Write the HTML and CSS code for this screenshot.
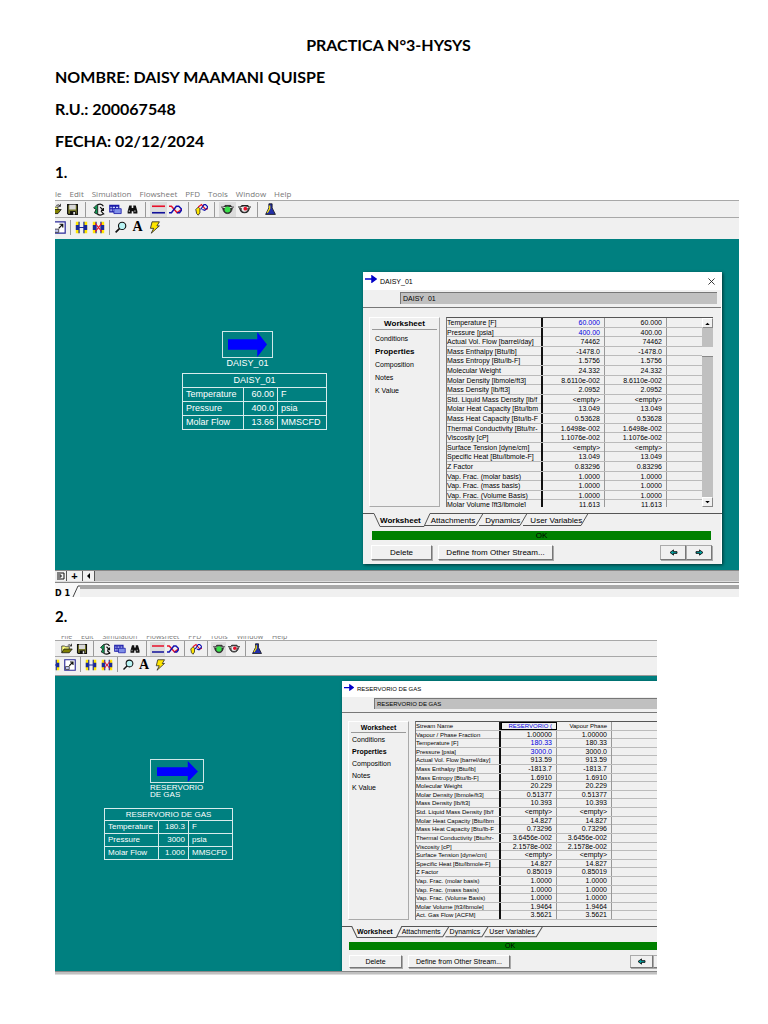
FILE: index.html
```html
<!DOCTYPE html>
<html lang="es">
<head>
<meta charset="utf-8">
<meta name="viewport" content="width=device-width, initial-scale=1">
<title>PRACTICA N°3-HYSYS</title>
<link rel="stylesheet" href="styles.css">
</head>
<body>
<svg class="sprites" aria-hidden="true">
  <symbol id="i-open" viewBox="0 0 16 16"><path d="M1 13V4h4l1 1h5v3" fill="#ffff80" stroke="#222"/><path d="M1 13l3-5h11l-4 5z" fill="#808000" stroke="#111"/><path d="M9 3q3-2 5 1M14 1v3h-3" fill="none" stroke="#111"/></symbol>
  <symbol id="i-save" viewBox="0 0 16 16"><path d="M2 2h12v12H3l-1-1z" fill="#77772a" stroke="#111" stroke-width="1.5"/><path d="M4 2h8v6H4z" fill="#d8d8d8"/><path d="M5 10h7v4H5z" fill="#111"/><path d="M9 11h2v3H9z" fill="#eee"/></symbol>
  <symbol id="i-nav" viewBox="0 0 16 16"><path d="M6 2L2 6l3 2-2 4 4 2V2z" fill="#119a55" stroke="#111"/><path d="M7 2q5-2 7 2M7 14q4 2 7-1M10 5l4 4M14 6v3h-3M11 10l4 4" fill="none" stroke="#111" stroke-width="1.5"/></symbol>
  <symbol id="i-book" viewBox="0 0 16 16"><path d="M1 3h11v8H1z" fill="#cfd8ff" stroke="#1a1aa8" stroke-width="1.5"/><path d="M1 4h11M4 4v7M8 4v7M1 7h11" stroke="#1a1aa8" stroke-width="1.3"/><path d="M6 7h9v6H6z" fill="#8090e8" stroke="#1a1aa8"/></symbol>
  <symbol id="i-find" viewBox="0 0 16 16"><path d="M4 3h3v3h2V3h3l2 7v3H9v-3H7v3H2v-3z" fill="#111"/><path d="M4 9v2M11 9v2" stroke="#eee"/></symbol>
  <symbol id="i-lines" viewBox="0 0 16 16"><path d="M0 4h16" stroke="#e8102a" stroke-width="2"/><path d="M0 12h16" stroke="#10109a" stroke-width="2"/></symbol>
  <symbol id="i-cross" viewBox="0 0 16 16"><path d="M0 4h3l7 8 5-4" fill="none" stroke="#e8102a" stroke-width="1.8"/><path d="M0 12h3l6-8h3l4 4-3 4h-3" fill="none" stroke="#1010b0" stroke-width="1.8"/></symbol>
  <symbol id="i-hand" viewBox="0 0 16 16"><path d="M1 8l3-3 2 2v5l-2 3-2-2z" fill="#ffe600" stroke="#222"/><path d="M4 5l4-3 5 6 3-1" fill="none" stroke="#e8102a" stroke-width="1.5"/><path d="M7 8l4-6h2l3 3-4 4-3-1" fill="none" stroke="#1010b0" stroke-width="1.5"/></symbol>
  <symbol id="i-go" viewBox="0 0 16 16"><path d="M0 5h3l2-2h7l1 2h3M2 6q1 7 6 7t6-7" fill="#333" stroke="#222"/><circle cx="8" cy="8" r="3.600" fill="#39e04a"/></symbol>
  <symbol id="i-hold" viewBox="0 0 16 16"><path d="M0 5h3l2-2h7l1 2h3M2 6q1 6 6 6t6-6" fill="#666" stroke="#222" stroke-width="1.300"/><circle cx="8" cy="7.500" r="3.300" fill="#eee"/><circle cx="9" cy="7" r="2.300" fill="#e8102a"/></symbol>
  <symbol id="i-flask" viewBox="0 0 16 16"><path d="M6 1h4v5l4 8H2l4-8z" fill="#2330a8" stroke="#111"/><path d="M7 3v4l-3 5" fill="none" stroke="#ffe600" stroke-width="1.5"/></symbol>
  <symbol id="i-size" viewBox="0 0 16 16"><path d="M1 1h14v14H1z" fill="#fff" stroke="#2a2a99" stroke-width="1.5"/><path d="M2 10h5v4H2z" fill="#bcc3ee" stroke="#333"/><path d="M7 9l5-5M8 4h4v4" fill="none" stroke="#111" stroke-width="1.5"/></symbol>
  <symbol id="i-link" viewBox="0 0 16 16"><path d="M1 1h4v14H1zM11 1h4v14h-4z" fill="#ffe600"/><path d="M1 5h4v6H1zM11 5h4v6h-4z" fill="#1a2a99"/><path d="M5 1v14M11 1v14M5 8h6" stroke="#1a2a99" stroke-width="1.5"/></symbol>
  <symbol id="i-unlink" viewBox="0 0 16 16"><path d="M1 1h4v14H1zM11 1h4v14h-4z" fill="#ffe600"/><path d="M1 5h4v6H1zM11 5h4v6h-4z" fill="#1a2a99"/><path d="M5 1v14M11 1v14" stroke="#1a2a99" stroke-width="1.5"/><path d="M4 3l8 10M12 3L4 13" stroke="#e8102a" stroke-width="1.3"/></symbol>
  <symbol id="i-zoom" viewBox="0 0 16 16"><circle cx="10" cy="6" r="4.500" fill="#b9f4f4" stroke="#111" stroke-width="1.4"/><path d="M7 9l-5 5" stroke="#111" stroke-width="2"/></symbol>
  <symbol id="i-bolt" viewBox="0 0 16 16"><path d="M5 1h9l-3 5h3L4 15l3-6H3z" fill="#ffe600" stroke="#222"/></symbol>
  <symbol id="i-arrow" viewBox="0 0 40 24" preserveAspectRatio="none"><path d="M0 7h30V0l10 12-10 12v-7H0z" fill="#0000ff"/></symbol>
  <symbol id="i-mini" viewBox="0 0 12 8"><path d="M0 4h8M7 1l4 3-4 3z" fill="#0000c8" stroke="#0000c8" stroke-width="1.5"/></symbol>
  <symbol id="i-left" viewBox="0 0 10 8"><path d="M1 4l4-3v2h4v2H5v2z" fill="#00a0a0" stroke="#111"/></symbol>
  <symbol id="i-right" viewBox="0 0 10 8"><path d="M9 4L5 1v2H1v2h4v2z" fill="#00a0a0" stroke="#111"/></symbol>
  <symbol id="i-tabs" viewBox="0 0 359 14" preserveAspectRatio="none"><path d="M0 0.500h11l6 13h44l6-13h292M62 12.500h51l7-12M116 12.500h41l7-12M160 12.500h58l7-12" fill="none" stroke="#555" vector-effect="non-scaling-stroke"/></symbol>
</svg>

<main class="page">
  <h1 class="line line--center">PRACTICA N°3-HYSYS</h1>
  <p class="line">NOMBRE: DAISY MAAMANI QUISPE</p>
  <p class="line">R.U.: 200067548</p>
  <p class="line">FECHA: 02/12/2024</p>
  <h2 class="line line--first">1.</h2>

  <section class="app" aria-label="DAISY_01">
    <nav class="menu"><a href="#">le</a><a href="#">Edit</a><a href="#">Simulation</a><a href="#">Flowsheet</a><a href="#">PFD</a><a href="#">Tools</a><a href="#">Window</a><a href="#">Help</a></nav>
    <div class="toolbar toolbar--main">
      <button class="tool" aria-label="Open"><svg><use href="#i-open"/></svg></button>
      <button class="tool" aria-label="Save"><svg><use href="#i-save"/></svg></button>
      <span class="sep"></span>
      <button class="tool" aria-label="Navigator"><svg><use href="#i-nav"/></svg></button>
      <button class="tool" aria-label="Workbook"><svg><use href="#i-book"/></svg></button>
      <button class="tool" aria-label="Find"><svg><use href="#i-find"/></svg></button>
      <span class="sep"></span>
      <button class="tool tool--on" aria-label="Streams"><svg><use href="#i-lines"/></svg></button>
      <button class="tool" aria-label="Crossed streams"><svg><use href="#i-cross"/></svg></button>
      <span class="sep"></span>
      <button class="tool" aria-label="Move"><svg><use href="#i-hand"/></svg></button>
      <span class="sep"></span>
      <button class="tool tool--on" aria-label="Solve"><svg><use href="#i-go"/></svg></button>
      <button class="tool" aria-label="Hold"><svg><use href="#i-hold"/></svg></button>
      <span class="sep"></span>
      <button class="tool" aria-label="Basis"><svg><use href="#i-flask"/></svg></button>
    </div>
    <div class="toolbar toolbar--pfd">
      <button class="tool" aria-label="Resize"><svg><use href="#i-size"/></svg></button>
      <span class="sep sep--tight"></span>
      <button class="tool" aria-label="Attach"><svg><use href="#i-link"/></svg></button>
      <button class="tool" aria-label="Detach"><svg><use href="#i-unlink"/></svg></button>
      <span class="sep sep--tight"></span>
      <button class="tool" aria-label="Zoom"><svg><use href="#i-zoom"/></svg></button>
      <button class="tool tool--text">A</button>
      <button class="tool" aria-label="Quick route"><svg><use href="#i-bolt"/></svg></button>
    </div>

    <div class="canvas">
      <div class="node">
        <div class="node-box"><svg><use href="#i-arrow"/></svg></div>
        <div class="node-name">DAISY_01</div>
      </div>
      <table class="flow">
        <colgroup><col class="flow-label"><col class="flow-value"><col></colgroup>
        <tr><th colspan="3">DAISY_01</th></tr>
        <tr><td>Temperature</td><td>60.00</td><td>F</td></tr>
        <tr><td>Pressure</td><td>400.0</td><td>psia</td></tr>
        <tr><td>Molar Flow</td><td>13.66</td><td>MMSCFD</td></tr>
      </table>

      <section class="window">
        <header class="title"><svg><use href="#i-mini"/></svg><span>DAISY_01</span>
          <button class="close" aria-label="Close"><svg viewBox="0 0 8 8"><path d="M0.500 0.500l7 7M7.500 0.500l-7 7" stroke="#222"/></svg></button></header>
        <div class="namebar"><input value="DAISY_01" aria-label="Stream name" readonly></div>
        <div class="body">
          <aside class="side">
            <h3>Worksheet</h3>
            <a href="#">Conditions</a><a href="#" class="current">Properties</a><a href="#">Composition</a><a href="#">Notes</a><a href="#">K Value</a>
          </aside>
          <div class="sheet">
            <table class="props">
              <tbody>
                <tr><th>Temperature [F]</th><td class="set">60.000</td><td>60.000</td><td></td></tr>
                <tr><th>Pressure [psia]</th><td class="set">400.00</td><td>400.00</td><td></td></tr>
                <tr><th>Actual Vol. Flow [barrel/day]</th><td>74462</td><td>74462</td><td></td></tr>
                <tr><th>Mass Enthalpy [Btu/lb]</th><td>-1478.0</td><td>-1478.0</td><td></td></tr>
                <tr><th>Mass Entropy [Btu/lb-F]</th><td>1.5756</td><td>1.5756</td><td></td></tr>
                <tr><th>Molecular Weight</th><td>24.332</td><td>24.332</td><td></td></tr>
                <tr><th>Molar Density [lbmole/ft3]</th><td>8.6110e-002</td><td>8.6110e-002</td><td></td></tr>
                <tr><th>Mass Density [lb/ft3]</th><td>2.0952</td><td>2.0952</td><td></td></tr>
                <tr><th>Std. Liquid Mass Density [lb/f</th><td>&lt;empty&gt;</td><td>&lt;empty&gt;</td><td></td></tr>
                <tr><th>Molar Heat Capacity [Btu/lbm</th><td>13.049</td><td>13.049</td><td></td></tr>
                <tr><th>Mass Heat Capacity [Btu/lb-F</th><td>0.53628</td><td>0.53628</td><td></td></tr>
                <tr><th>Thermal Conductivity [Btu/hr-</th><td>1.6498e-002</td><td>1.6498e-002</td><td></td></tr>
                <tr><th>Viscosity [cP]</th><td>1.1076e-002</td><td>1.1076e-002</td><td></td></tr>
                <tr><th>Surface Tension [dyne/cm]</th><td>&lt;empty&gt;</td><td>&lt;empty&gt;</td><td></td></tr>
                <tr><th>Specific Heat [Btu/lbmole-F]</th><td>13.049</td><td>13.049</td><td></td></tr>
                <tr><th>Z Factor</th><td>0.83296</td><td>0.83296</td><td></td></tr>
                <tr><th>Vap. Frac. (molar basis)</th><td>1.0000</td><td>1.0000</td><td></td></tr>
                <tr><th>Vap. Frac. (mass basis)</th><td>1.0000</td><td>1.0000</td><td></td></tr>
                <tr><th>Vap. Frac. (Volume Basis)</th><td>1.0000</td><td>1.0000</td><td></td></tr>
                <tr><th>Molar Volume [ft3/lbmole]</th><td>11.613</td><td>11.613</td><td></td></tr>
              </tbody>
            </table>
            <div class="scroll"><button aria-label="Up"><svg viewBox="0 0 6 4"><path d="M0 4l3-3 3 3z"/></svg></button><span class="thumb"></span><button aria-label="Down"><svg viewBox="0 0 6 4"><path d="M0 0l3 3 3-3z"/></svg></button></div>
          </div>
        </div>
        <div class="tabs"><svg class="tabs-line"><use href="#i-tabs"/></svg><button class="current">Worksheet</button><button>Attachments</button><button>Dynamics</button><button>User Variables</button></div>
        <div class="status">OK</div>
        <div class="actions"><button class="btn btn--delete">Delete</button><button class="btn btn--define">Define from Other Stream...</button>
          <button class="btn btn--step btn--prev" aria-label="Previous"><svg><use href="#i-left"/></svg></button><button class="btn btn--step" aria-label="Next"><svg><use href="#i-right"/></svg></button></div>
      </section>
    </div>

    <div class="hscroll"><button aria-label="Fit"><svg viewBox="0 0 8 8"><path d="M0 1h7v6H0M0 3h4v2H0" fill="none" stroke="#111"/></svg></button><button class="plus">+</button><button aria-label="Left"><svg viewBox="0 0 8 8"><path d="M5 1v6L2 4z"/></svg></button></div>
    <div class="sheet-tabs"><span>D 1</span><svg viewBox="0 0 8 12"><path d="M1 12L6 1h2" fill="none" stroke="#444"/></svg><div class="sheet-bar"></div></div>
  </section>

  <h2 class="line line--second">2.</h2>

  <section class="app app--small" aria-label="RESERVORIO DE GAS">
    <nav class="menu"><a href="#">File</a><a href="#">Edit</a><a href="#">Simulation</a><a href="#">Flowsheet</a><a href="#">PFD</a><a href="#">Tools</a><a href="#">Window</a><a href="#">Help</a></nav>
    <div class="toolbar toolbar--main">
      <button class="tool" aria-label="Open"><svg><use href="#i-open"/></svg></button>
      <button class="tool" aria-label="Save"><svg><use href="#i-save"/></svg></button>
      <span class="sep"></span>
      <button class="tool" aria-label="Navigator"><svg><use href="#i-nav"/></svg></button>
      <button class="tool" aria-label="Workbook"><svg><use href="#i-book"/></svg></button>
      <button class="tool" aria-label="Find"><svg><use href="#i-find"/></svg></button>
      <span class="sep"></span>
      <button class="tool tool--on" aria-label="Streams"><svg><use href="#i-lines"/></svg></button>
      <button class="tool" aria-label="Crossed streams"><svg><use href="#i-cross"/></svg></button>
      <span class="sep"></span>
      <button class="tool" aria-label="Move"><svg><use href="#i-hand"/></svg></button>
      <span class="sep"></span>
      <button class="tool tool--on" aria-label="Solve"><svg><use href="#i-go"/></svg></button>
      <button class="tool" aria-label="Hold"><svg><use href="#i-hold"/></svg></button>
      <span class="sep"></span>
      <button class="tool" aria-label="Basis"><svg><use href="#i-flask"/></svg></button>
    </div>
    <div class="toolbar toolbar--pfd">
      <button class="tool" aria-label="Insert"><svg><use href="#i-link"/></svg></button>
      <button class="tool" aria-label="Resize"><svg><use href="#i-size"/></svg></button>
      <span class="sep sep--tight"></span>
      <button class="tool" aria-label="Attach"><svg><use href="#i-link"/></svg></button>
      <button class="tool" aria-label="Detach"><svg><use href="#i-unlink"/></svg></button>
      <span class="sep sep--tight"></span>
      <button class="tool" aria-label="Zoom"><svg><use href="#i-zoom"/></svg></button>
      <button class="tool tool--text">A</button>
      <button class="tool" aria-label="Quick route"><svg><use href="#i-bolt"/></svg></button>
    </div>

    <div class="canvas">
      <div class="node">
        <div class="node-box"><svg><use href="#i-arrow"/></svg></div>
        <div class="node-name">RESERVORIO<br>DE GAS</div>
      </div>
      <table class="flow">
        <colgroup><col class="flow-label"><col class="flow-value"><col></colgroup>
        <tr><th colspan="3">RESERVORIO DE GAS</th></tr>
        <tr><td>Temperature</td><td>180.3</td><td>F</td></tr>
        <tr><td>Pressure</td><td>3000</td><td>psia</td></tr>
        <tr><td>Molar Flow</td><td>1.000</td><td>MMSCFD</td></tr>
      </table>

      <section class="window">
        <header class="title"><svg><use href="#i-mini"/></svg><span>RESERVORIO DE GAS</span></header>
        <div class="namebar"><input value="RESERVORIO DE GAS" aria-label="Stream name" readonly></div>
        <div class="body">
          <aside class="side">
            <h3>Worksheet</h3>
            <a href="#">Conditions</a><a href="#" class="current">Properties</a><a href="#">Composition</a><a href="#">Notes</a><a href="#">K Value</a>
          </aside>
          <div class="sheet">
            <table class="props">
              <tbody>
                <tr><th>Stream Name</th><td class="set picked">RESERVORIO (</td><td>Vapour Phase</td><td></td></tr>
                <tr><th>Vapour / Phase Fraction</th><td>1.00000</td><td>1.00000</td><td></td></tr>
                <tr><th>Temperature [F]</th><td class="set">180.33</td><td>180.33</td><td></td></tr>
                <tr><th>Pressure [psia]</th><td class="set">3000.0</td><td>3000.0</td><td></td></tr>
                <tr><th>Actual Vol. Flow [barrel/day]</th><td>913.59</td><td>913.59</td><td></td></tr>
                <tr><th>Mass Enthalpy [Btu/lb]</th><td>-1813.7</td><td>-1813.7</td><td></td></tr>
                <tr><th>Mass Entropy [Btu/lb-F]</th><td>1.6910</td><td>1.6910</td><td></td></tr>
                <tr><th>Molecular Weight</th><td>20.229</td><td>20.229</td><td></td></tr>
                <tr><th>Molar Density [lbmole/ft3]</th><td>0.51377</td><td>0.51377</td><td></td></tr>
                <tr><th>Mass Density [lb/ft3]</th><td>10.393</td><td>10.393</td><td></td></tr>
                <tr><th>Std. Liquid Mass Density [lb/f</th><td>&lt;empty&gt;</td><td>&lt;empty&gt;</td><td></td></tr>
                <tr><th>Molar Heat Capacity [Btu/lbm</th><td>14.827</td><td>14.827</td><td></td></tr>
                <tr><th>Mass Heat Capacity [Btu/lb-F</th><td>0.73296</td><td>0.73296</td><td></td></tr>
                <tr><th>Thermal Conductivity [Btu/hr-</th><td>3.6456e-002</td><td>3.6456e-002</td><td></td></tr>
                <tr><th>Viscosity [cP]</th><td>2.1578e-002</td><td>2.1578e-002</td><td></td></tr>
                <tr><th>Surface Tension [dyne/cm]</th><td>&lt;empty&gt;</td><td>&lt;empty&gt;</td><td></td></tr>
                <tr><th>Specific Heat [Btu/lbmole-F]</th><td>14.827</td><td>14.827</td><td></td></tr>
                <tr><th>Z Factor</th><td>0.85019</td><td>0.85019</td><td></td></tr>
                <tr><th>Vap. Frac. (molar basis)</th><td>1.0000</td><td>1.0000</td><td></td></tr>
                <tr><th>Vap. Frac. (mass basis)</th><td>1.0000</td><td>1.0000</td><td></td></tr>
                <tr><th>Vap. Frac. (Volume Basis)</th><td>1.0000</td><td>1.0000</td><td></td></tr>
                <tr><th>Molar Volume [ft3/lbmole]</th><td>1.9464</td><td>1.9464</td><td></td></tr>
                <tr><th>Act. Gas Flow [ACFM]</th><td>3.5621</td><td>3.5621</td><td></td></tr>
              </tbody>
            </table>
          </div>
        </div>
        <div class="tabs"><svg class="tabs-line"><use href="#i-tabs"/></svg><button class="current">Worksheet</button><button>Attachments</button><button>Dynamics</button><button>User Variables</button></div>
        <div class="status">OK</div>
        <div class="actions"><button class="btn btn--delete">Delete</button><button class="btn btn--define">Define from Other Stream...</button>
          <button class="btn btn--step btn--prev" aria-label="Previous"><svg><use href="#i-left"/></svg></button><button class="btn btn--step" aria-label="Next"><svg><use href="#i-right"/></svg></button></div>
      </section>
    </div>
    <div class="hscroll"></div>
  </section>
</main>
</body>
</html>
```

FILE: styles.css
```css
* { box-sizing: border-box; }

body {
  margin: 0;
  background: #fff;
  color: #000;
  font-family: "Liberation Sans", sans-serif;
}

button, input { margin: 0; padding: 0; border: 0; background: none; color: inherit; font: inherit; }
a { color: inherit; text-decoration: none; }
svg { display: block; flex: none; }
.sprites { position: absolute; width: 0; height: 0; }

.page { padding: 29px 46px 40px 55px; }

.line {
  margin: 0;
  font-family: Lato, sans-serif;
  font-size: 16px;
  font-weight: 700;
  line-height: 32px;
}
.line--center { text-align: center; }
.line--first { font-size: 15px; line-height: 31px; }
.line--second { font-size: 15px; line-height: 39px; }

/* Simulator screen */
.app {
  --tool: 17px;
  --icon: 13px;
  --sep: 9px;
  --small: 7px;
  --ui: 8px;
  margin-right: -17px;
  overflow: hidden;
}

.menu {
  display: flex;
  gap: 8px;
  height: 12px;
  overflow: hidden;
  font-family: "Open Sans", sans-serif;
  font-size: 8px;
  line-height: 11px;
  color: #777;
}

.toolbar {
  display: flex;
  align-items: center;
  height: 17px;
  background: #f0f0f0;
  border-top: 1px solid #a8a8a8;
}
.toolbar--main .tool:first-child { margin-left: -8px; }
.toolbar--pfd { height: 22px; padding-bottom: 3px; }
.toolbar--pfd .tool:first-child { margin-left: -4px; }

.tool {
  display: flex;
  flex: none;
  align-items: center;
  justify-content: center;
  width: var(--tool);
  height: 15px;
}
.tool svg { width: var(--icon); height: var(--icon); }
.tool--on { background: #dcdcdc; }
.tool--text { font-family: "Liberation Serif", serif; font-size: 14px; font-weight: 700; }
.sep { flex: none; width: 1px; height: 15px; margin: 0 calc((var(--sep) - 1px) / 2); background: #999; }
.sep--tight { margin: 0 2px; }

.canvas {
  position: relative;
  height: 331px;
  overflow: hidden;
  background: #008080;
}

.node { position: absolute; left: 167px; top: 92px; width: 51px; color: #fff; font-size: 9px; line-height: 10px; }
.node-box { display: flex; align-items: center; justify-content: center; height: 27px; border: 1px solid #d0e8e8; }
.node-box svg { width: 39px; height: 25px; }
.node-name { text-align: center; white-space: nowrap; }

.flow {
  position: absolute;
  left: 127px;
  top: 134px;
  width: 145px;
  border-collapse: collapse;
  table-layout: fixed;
  color: #fff;
  font-size: 9px;
  line-height: 13px;
  white-space: nowrap;
}
.flow th, .flow td { padding: 0 3px; border: 1px solid #d8ecec; font-weight: 400; }
.flow-label { width: 61px; }
.flow-value { width: 34px; }
.flow td:nth-child(2) { text-align: right; }

/* Stream property window */
.window {
  position: absolute;
  left: 308px;
  top: 33px;
  width: 359px;
  padding-bottom: 4px;
  background: #f0f0f0;
  font-size: var(--small);
  border-right: 1px solid #fff;
  box-shadow: 1px 1px 3px #033;
}

.title { display: flex; align-items: center; height: 18px; padding: 0 6px 0 2px; background: #fff; }
.title > svg { width: 12px; height: 8px; margin: 0 3px 4px 0; }
.close { margin-left: auto; }
.close svg { width: 7px; height: 7px; }

.namebar {
  display: flex;
  align-items: center;
  height: 18px;
  padding: 0 4px 2px 37px;
  border-bottom: 1px solid #777;
}
.namebar input { width: 100%; height: 12px; padding-left: 2px; background: #c0c0c0; border: solid #777; border-width: 1px 0 0 1px; font-size: var(--small); line-height: 11px; }

.body { display: flex; gap: 6px; height: 205px; padding: 9px 8px 6px 6px; }

.side { flex: none; width: 71px; border: 1px solid; border-color: #fff #aaa #aaa #fff; }
.side h3 { height: 12px; margin: 0 2px 2px; border-bottom: 1px solid #999; font-size: var(--ui); line-height: 12px; text-align: center; }
.side a { display: block; padding-left: 5px; line-height: 13px; }
.side .current, .tabs .current { font-weight: 700; }
.side .current { font-size: var(--ui); }

.sheet { display: flex; flex: 1; min-width: 0; overflow: hidden; border-top: 1px solid #555; border-left: 1px solid #777; }
.props { display: block; flex: 1; min-width: 0; }
.props tbody { display: grid; grid-template-rows: repeat(20, 1fr); height: 192px; }
.props tr { display: grid; grid-template-columns: 96px 62px 62px 1fr; min-height: 0; border-bottom: 1px solid #bbb; }
.props th, .props td { display: block; min-width: 0; padding: 0 4px 0 0; border-right: 1px solid #999; white-space: nowrap; line-height: 9px; }
.props th { padding: 0; border-right: 2px solid #111; font-weight: 400; text-align: left; }
.props td { text-align: right; }
.props td:last-child { border-right: 0; }
.props .set { color: #0000e0; }
.props .picked { border: 1px solid #000; line-height: 7px; }

.scroll { display: flex; flex: none; flex-direction: column; width: 11px; background: #c0c0c0; }
.scroll button { display: flex; align-items: center; justify-content: center; height: 10px; background: #f0f0f0; border: 1px solid; border-color: #fff #888 #888 #fff; }
.scroll svg { width: 5px; height: 3px; }
.thumb { height: 10px; margin: 19px 0 auto; background: #f0f0f0; border-bottom: 1px solid #888; }

.tabs { position: relative; display: flex; gap: 10px; height: 14px; padding-left: 17px; font-size: var(--ui); line-height: 13px; white-space: nowrap; }
.tabs-line { position: absolute; left: 0; top: 0; width: 359px; height: 14px; }
.tabs button { position: relative; }

.status { height: 9px; margin: 4px 10px 5px 9px; background: #008000; color: #000; font-size: var(--ui); line-height: 9px; text-align: center; }

.actions { display: flex; gap: 6px; padding: 0 9px 0 8px; }
.btn { display: flex; flex: none; align-items: center; justify-content: center; height: 15px; border: 1px solid; border-color: #fff #777 #777 #fff; font-size: var(--ui); white-space: nowrap; box-shadow: 1px 1px 0 #aaa; }
.btn--delete { width: 61px; }
.btn--define { width: 115px; }
.btn--step { width: 26px; border-color: #aaa #777 #777 #aaa; }
.btn--step svg { width: 9px; height: 7px; }
.btn--prev { margin: 0 -6px 0 auto; }

.hscroll { display: flex; height: 12px; background: #c0c0c0; border-top: 1px solid #888; border-bottom: 1px solid #ddd; }
.hscroll button { display: flex; align-items: center; justify-content: center; width: 12px; background: #f0f0f0; border-right: 1px solid #555; font-size: 11px; font-weight: 700; line-height: 10px; }
.hscroll .plus { width: 16px; }
.hscroll svg { width: 8px; height: 8px; }

.sheet-tabs { display: flex; height: 15px; border-top: 1px solid #888; background: #f8f8f8; }
.sheet-tabs span { padding-top: 5px; font-family: "DejaVu Sans", sans-serif; font-size: 8px; font-weight: 700; line-height: 11px; }
.sheet-tabs svg { width: 8px; height: 12px; margin: 2px 0 0 2px; }
.sheet-bar { flex: 1; margin-top: 2px; border-top: 4px solid #a8a8a8; background: #f0f0f0; }

/* Smaller, cropped screen */
.app--small {
  --tool: 15px;
  --icon: 12px;
  --sep: 8px;
  --small: 6px;
  --ui: 7px;
  max-width: 602px;
}
.app--small .menu { height: 4px; padding-left: 6px; font-size: 7px; line-height: 1px; gap: 9px; }
.app--small .toolbar { height: 16px; }
.app--small .toolbar--main .tool:first-child { margin-left: 4px; }
.app--small .toolbar--pfd { --tool: 16px; height: 20px; border-bottom: 1px solid #999; }
.app--small .toolbar--pfd .tool:first-child { margin-left: -9px; }
.app--small .tool { height: 14px; }
.app--small .canvas { height: 295px; }
.app--small .node { left: 95px; top: 83px; width: 54px; font-size: 8px; line-height: 7px; }
.app--small .node-box { height: 24px; }
.app--small .node-box svg { width: 41px; height: 21px; }
.app--small .node-name { padding-top: 1px; text-align: left; }
.app--small .flow { left: 49px; top: 132px; width: 129px; font-size: 8px; line-height: 12px; }
.app--small .flow th { line-height: 11px; }
.app--small .flow-label { width: 54px; }
.app--small .flow-value { width: 30px; }
.app--small .window { left: 287px; top: 5px; width: 330px; padding-bottom: 3px; }
.app--small .title { height: 16px; }
.app--small .title > svg { width: 10px; height: 7px; }
.app--small .namebar { height: 16px; padding: 0 0 2px 32px; }
.app--small .namebar input { height: 11px; line-height: 10px; }
.app--small .body { height: 213px; padding: 8px 0 6px 6px; }
.app--small .side { width: 61px; font-size: 7px; }
.app--small .side a { padding-left: 3px; line-height: 12px; }
.app--small .side h3 { height: 11px; line-height: 11px; margin-bottom: 1px; }
.app--small .props tbody { grid-template-rows: repeat(23, 1fr); height: 198px; }
.app--small .props tr { grid-template-columns: 85px 56px 55px 1fr; }
.app--small .props th, .app--small .props td { line-height: 8px; }
.app--small .props td { font-size: 7px; }
.app--small .props .picked { font-size: 6px; line-height: 6px; }
.app--small .props tr:first-child td:nth-child(3) { font-size: 6px; }
.app--small .tabs { gap: 9px; height: 12px; padding-left: 15px; line-height: 12px; }
.app--small .tabs-line { width: 320px; height: 12px; }
.app--small .status { height: 8px; margin: 4px 0 5px 7px; line-height: 8px; }
.app--small .actions { padding: 0 0 0 7px; }
.app--small .btn { height: 13px; }
.app--small .btn--delete { width: 53px; }
.app--small .btn--define { width: 102px; }
.app--small .btn--step { width: 23px; }
.app--small .btn--prev { margin-left: 114px; }
.app--small .hscroll { height: 4px; }
```
